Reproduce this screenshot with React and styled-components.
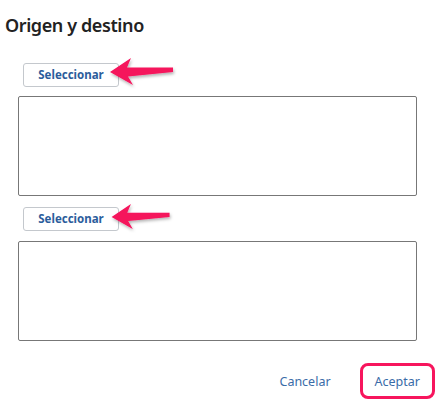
import styled, { createGlobalStyle } from "styled-components";

const GlobalStyle = createGlobalStyle`
  html, body {
    margin: 0;
    padding: 0;
    background: #ffffff;
  }
  body {
    font-family: "Noto Sans", "Open Sans", sans-serif;
    color: #222;
  }
`;

const Arrow = ({ top, left, scale = 1 }) => (
  <ArrowSvg
    style={{ top, left, transform: `scale(${scale})` }}
    width="75"
    height="38"
    viewBox="0 0 75 38"
  >
    <defs>
      <filter id="arrowShadow" x="-20%" y="-40%" width="140%" height="180%">
        <feDropShadow dx="1" dy="2" stdDeviation="1.5" floodColor="#000" floodOpacity="0.3" />
      </filter>
    </defs>
    <polygon
      points="5,20 26,6 22,15.5 68,15.5 68,20 23,24.5 28,33"
      fill="#f5135c"
      filter="url(#arrowShadow)"
    />
  </ArrowSvg>
);

const App = () => {
  return (
    <Page>
      <GlobalStyle />
      <Title>Origen y destino</Title>
      <Section>
        <PickRow>
          <SelectButton>Seleccionar</SelectButton>
          <Arrow top={-10} left={82} />
        </PickRow>
        <Box />
        <PickRow $gap={10}>
          <SelectButton>Seleccionar</SelectButton>
          <Arrow top={-9} left={84} scale={0.92} />
        </PickRow>
        <Box $gap={11} />
      </Section>
      <Footer>
        <TextButton>Cancelar</TextButton>
        <TextButton $highlighted>Aceptar</TextButton>
      </Footer>
    </Page>
  );
};

const Page = styled.div`
  width: 441px;
  height: 402px;
  box-sizing: border-box;
  padding-top: 12px;
  display: flex;
  flex-direction: column;
`;

const Title = styled.h2`
  margin: 0 0 0 5px;
  font-size: 18px;
  letter-spacing: -0.4px;
  line-height: 26px;
  font-weight: 600;
  color: #222;
`;

const Section = styled.div`
  margin: 24px 0 0 18px;
  width: 399px;
  display: flex;
  flex-direction: column;
`;

const PickRow = styled.div`
  position: relative;
  margin: ${(p) => p.$gap || 0}px 0 0 5px;
  height: 24px;
`;

const SelectButton = styled.button`
  width: 96px;
  height: 24px;
  padding: 0;
  background: #fff;
  border: 1px solid #c4c8cd;
  border-radius: 3px;
  font-family: "Noto Sans", "Open Sans", sans-serif;
  font-size: 11.5px;
  font-weight: 700;
  color: #2b5d9c;
`;

const ArrowSvg = styled.svg`
  position: absolute;
  transform-origin: 0 50%;
`;

const Box = styled.div`
  margin-top: ${(p) => p.$gap || 10}px;
  height: 98px;
  border: 1px solid #777;
  border-radius: 2px;
`;

const Footer = styled.div`
  margin-top: 22px;
  padding-right: 6px;
  display: flex;
  justify-content: flex-end;
  align-items: center;
  gap: 14px;
`;

const TextButton = styled.button`
  height: 36px;
  padding: 0 12px;
  background: transparent;
  border: ${(p) => (p.$highlighted ? "3px solid #f7155d" : "3px solid transparent")};
  border-radius: 8px;
  font-family: "Noto Sans", "Open Sans", sans-serif;
  font-size: 12.5px;
  color: #3a6ca8;
`;

export default App;
